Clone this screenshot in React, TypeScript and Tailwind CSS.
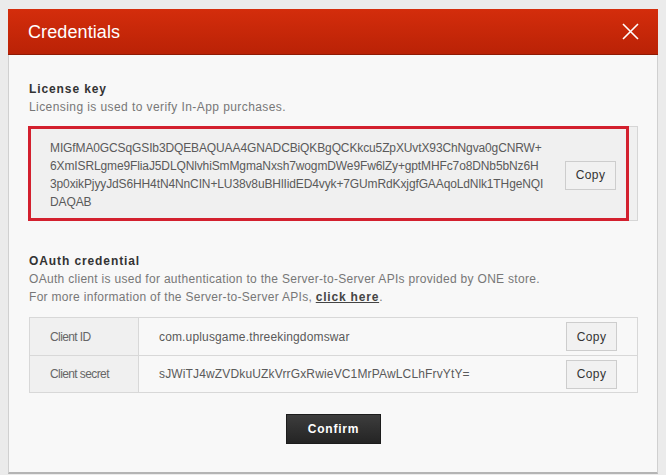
import React from "react";

const F = { fontFamily: '"Liberation Sans", Arial, sans-serif' };

function CopyBtn() {
  return (
    <button
      className="w-[51px] h-[29px] bg-[#f1f1f1] border border-[#cdcdcd] text-[12px] text-[#333] tracking-[0.4px] leading-none flex items-center justify-center shrink-0"
      style={F}
    >
      Copy
    </button>
  );
}

export default function App() {
  const keyLines = [
    "MIGfMA0GCSqGSIb3DQEBAQUAA4GNADCBiQKBgQCKkcu5ZpXUvtX93ChNgva0gCNRW+",
    "6XmISRLgme9FliaJ5DLQNlvhiSmMgmaNxsh7wogmDWe9Fw6lZy+gptMHFc7o8DNb5bNz6H",
    "3p0xikPjyyJdS6HH4tN4NnCIN+LU38v8uBHlIidED4vyk+7GUmRdKxjgfGAAqoLdNlk1THgeNQI",
    "DAQAB",
  ];
  return (
    <div className="w-[666px] h-[475px] bg-[#ebebeb] pt-[9px] pl-[8px] overflow-hidden" style={F}>
      <div className="w-[650px]">
        <div className="h-[46px] bg-gradient-to-b from-[#d42d0c] to-[#ba2206] border-b border-[#8f1a04] flex items-center justify-between pl-[20px] pr-[18px]">
          <span className="text-white text-[18px] leading-none tracking-[0.1px] mt-[1px]">Credentials</span>
          <svg width="17" height="17" viewBox="0 0 17 17" className="mr-[1px]">
            <path d="M1 1L16 16M16 1L1 16" stroke="white" strokeWidth="1.6" fill="none" />
          </svg>
        </div>
        <div className="h-[419px] bg-[#f8f8f8] border-x border-[#d0d0d0] border-b-2 border-b-[#b4b4b4] pt-[25px] pl-[19px] pr-[19px]">
          <div className="text-[12px] font-bold text-[#333] leading-[18px] tracking-[0.9px] pl-[1px]">License key</div>
          <div className="text-[12px] text-[#777] leading-[18px] tracking-[0.42px] pl-[1px]">
            Licensing is used to verify In-App purchases.
          </div>
          <div className="relative mt-[10px] h-[95px] bg-[#f0f0f0] border border-[#d6d6d6] flex items-center pl-[21px] pr-[21px]">
            <div className="w-[515px] text-[12px] text-[#5a5a5a] leading-[18px] tracking-[-0.12px] mt-[3px]">
              {keyLines.map((l) => (
                <div key={l} className="whitespace-nowrap">{l}</div>
              ))}
            </div>
            <div className="ml-auto mt-[3px]">
              <CopyBtn />
            </div>
            <div className="absolute -top-[1px] -left-[1px] -bottom-[1px] right-[8px] border-[3px] border-[#d3202e]" />
          </div>

          <div className="mt-[31px] text-[12px] font-bold text-[#333] leading-[18px] tracking-[0.9px] pl-[1px]">OAuth credential</div>
          <div className="text-[12px] text-[#777] leading-[18px] tracking-[0.3px] pl-[1px]">
            OAuth client is used for authentication to the Server-to-Server APIs provided by ONE store.
          </div>
          <div className="text-[12px] text-[#777] leading-[18px] tracking-[0.3px] pl-[1px]">
            For more information of the Server-to-Server APIs,{" "}
            <span className="font-bold text-[#444] underline tracking-[0.8px]">click here</span>.
          </div>

          <div className="mt-[11px] ml-[1px] border border-[#d8d8d8] bg-[#f8f8f8]">
            {[
              ["Client ID", "com.uplusgame.threekingdomswar"],
              ["Client secret", "sJWiTJ4wZVDkuUZkVrrGxRwieVC1MrPAwLCLhFrvYtY="],
            ].map(([k, v], i) => (
              <div key={k} className={`flex h-[37px] ${i > 0 ? "border-t border-[#d8d8d8]" : ""}`}>
                <div className="w-[109px] bg-[#f0f0f0] border-r border-[#d8d8d8] flex items-center pl-[20px] text-[12px] text-[#666] tracking-[-0.6px]">
                  {k}
                </div>
                <div className="flex-1 flex items-center justify-between pl-[20px] pr-[20px] text-[12px] text-[#5a5a5a] tracking-[0.15px]">
                  <span>{v}</span>
                  <CopyBtn />
                </div>
              </div>
            ))}
          </div>

          <div className="flex justify-center mt-[21px]">
            <button className="w-[95px] h-[30px] bg-gradient-to-b from-[#3d3d3d] to-[#242424] border border-[#1c1c1c] text-white text-[12px] font-bold tracking-[0.8px] leading-none ml-[1px]">
              Confirm
            </button>
          </div>
        </div>
      </div>
    </div>
  );
}
